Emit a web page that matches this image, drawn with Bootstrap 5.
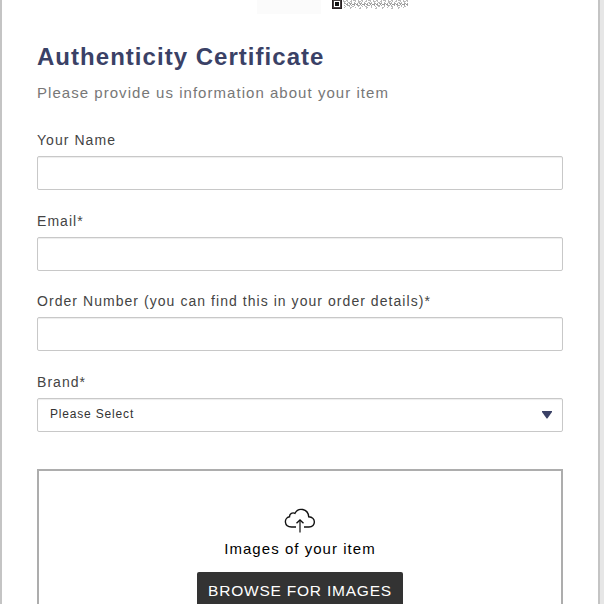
<!DOCTYPE html>
<html lang="en">
<head>
<meta charset="utf-8">
<meta name="viewport" content="width=device-width, initial-scale=1">
<title>Authenticity Certificate</title>
<link href="https://cdn.jsdelivr.net/npm/bootstrap@5.3.0/dist/css/bootstrap.min.css" rel="stylesheet">
<style>
body{font-family:"Liberation Sans",Arial,sans-serif;background:#e6e6e6;height:604px}
.sheet{width:600px;height:604px;border:solid #c4c4c4;border-width:0 2px;padding:0 35px}
.preview{height:14px;margin-left:220px}
.preview-photo{width:64px;height:14px;background:#fbfbfb}
.preview-code{margin-left:11px}
.title{font-size:24px;line-height:28px;letter-spacing:1.03px;color:#3a4166;margin-top:29px}
.intro{font-size:15px;line-height:20px;letter-spacing:1.04px;color:#777;margin-top:12px;margin-bottom:27px}
.field{height:80.67px}
.field label{font-size:14px;line-height:20px;letter-spacing:1.05px;color:#444;margin-bottom:6px}
.field .form-control,.field .form-select{height:34px;border:1px solid #c8c8c8;border-radius:2px;box-shadow:inset 0 1px 1px rgba(0,0,0,.075)}
.field .form-select{font-size:12px;line-height:18px;letter-spacing:.82px;color:#333;padding:6px 32px 8px 12px;background-image:none}
.caret{right:11px;top:13px;pointer-events:none}
.drop{height:136px;border:2px solid #adadad;border-bottom:0;margin-top:16px;color:#000}
.drop-icon{margin-top:37px}
.drop-text{font-size:15px;line-height:20px;letter-spacing:1.04px;margin-top:5px}
.browse{width:206px;height:40px;margin-top:13px;background:#333!important;color:#fff!important;border:0;border-radius:2px;font-size:15.5px;line-height:24px;letter-spacing:.78px;padding:7px 0 9px;white-space:nowrap}
</style>
</head>
<body class="overflow-hidden">
<main class="sheet bg-white overflow-hidden">
  <div class="preview d-flex">
    <div class="preview-photo"></div>
    <svg class="preview-code" width="78" height="14" shape-rendering="crispEdges" fill="none">
      <path d="M0 0h10v9H0z" fill="#282022"/><path d="M1 0h8v8H1z" fill="#fff" opacity=".15"/><path d="M2 1h6v6H2z" fill="#fff"/><path d="M3 2h4v4H3z" fill="#111"/>
      <g stroke="#bbb">
        <path d="M11 .5h65" stroke-dasharray="1 2 2 3 1 1 3 2"/>
        <path d="M11 1.5h65" stroke-dasharray="3 1 1 2 2 3 1 2"/>
        <path d="M12 2.5h64" stroke-dasharray="1 3 2 1 1 2"/>
        <path d="M12 3.500h64" stroke="#aaa" stroke-dasharray="2 1 1 1 3 2"/>
        <path d="M14 4.500h62" stroke="#999" stroke-dasharray="2 2 1 1 3 1"/>
        <path d="M12 5.500h64" stroke="#aaa" stroke-dasharray="1 2 3 1 1 2"/>
        <path d="M13 6.500h62" stroke-dasharray="1 3 1 2 2 4"/>
        <path d="M12 7.500h63" stroke-dasharray="1 5 2 3 1 4"/>
        <path d="M18 8.500h57" stroke-dasharray="1 8 2 5"/>
      </g>
    </svg>
  </div>
  <h1 class="title fw-bold mb-0">Authenticity Certificate</h1>
  <p class="intro">Please provide us information about your item</p>
  <form>
    <div class="field"><label class="d-block" for="name">Your Name</label><input class="form-control" id="name" type="text"></div>
    <div class="field"><label class="d-block" for="email">Email*</label><input class="form-control" id="email" type="email"></div>
    <div class="field"><label class="d-block" for="order">Order Number (you can find this in your order details)*</label><input class="form-control" id="order" type="text"></div>
    <div class="field"><label class="d-block" for="brand">Brand*</label>
      <div class="position-relative">
        <select class="form-select" id="brand"><option>Please Select</option></select>
        <svg class="caret position-absolute" width="10" height="8"><path d="M0 0h10v1L5.4 7.5h-.8L0 1z" fill="#3a4166"/></svg>
      </div>
    </div>
    <div class="drop d-flex flex-column align-items-center">
      <svg class="drop-icon flex-shrink-0" width="32" height="26" viewBox="0 0 32 26" fill="none" stroke="#111" stroke-width="1.4">
        <path d="M12 19H7.500C-.2 19-.3 9.800 5.500 8.800C5.600 5.300 8.500 4.200 11 5.300C14-.8 24 .2 24.700 8.800C32.300 9.200 32.100 19 25 19H20"/>
        <path d="M16 24.500V12.500" stroke="#555" stroke-width="1.700"/><path d="M12.500 15.300L16 12L19.500 15.300"/>
      </svg>
      <div class="drop-text">Images of your item</div>
      <button class="btn browse flex-shrink-0" type="button">BROWSE FOR IMAGES</button>
    </div>
  </form>
</main>
<script src="https://cdn.jsdelivr.net/npm/bootstrap@5.3.0/dist/js/bootstrap.bundle.min.js"></script>
</body>
</html>
